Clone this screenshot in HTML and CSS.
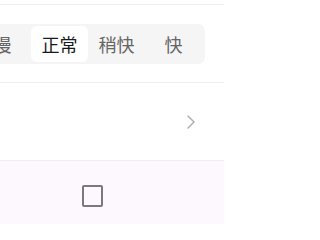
FILE: index.html
```html
<!DOCTYPE html>
<html lang="zh">
<head>
<meta charset="utf-8">
<link rel="stylesheet" href="styles.css">
</head>
<body>
<div class="page">
  <div class="prev-row"></div>
  <div class="speed-row">
    <div class="segmented">
      <div class="seg">慢</div>
      <div class="seg active">正常</div>
      <div class="seg">稍快</div>
      <div class="seg">快</div>
    </div>
  </div>
  <div class="link-row">
    <svg class="chevron" width="10" height="16" viewBox="0 0 10 16"><polyline points="2,2 8,8 2,14" fill="none" stroke="#b0b0b0" stroke-width="1.5" stroke-linecap="round" stroke-linejoin="round"/></svg>
  </div>
  <div class="bottom">
    <div class="checkbox"></div>
  </div>
</div>
</body>
</html>
```
FILE: styles.css
```css
html, body {
  margin: 0;
  padding: 0;
  background: #ffffff;
  font-family: "Noto Sans CJK SC", "Noto Sans", sans-serif;
}
.page {
  width: 224px;
  height: 224px;
  overflow: hidden;
}
.prev-row {
  height: 4px;
  border-bottom: 1px solid #f0f0f0;
}
.speed-row {
  height: 77px;
  border-bottom: 1px solid #eeeeee;
  display: flex;
  align-items: center;
}
.segmented {
  display: flex;
  margin-left: -29px;
  padding: 2px 3px;
  background: #f5f5f5;
  border-radius: 7px;
}
.seg {
  width: 57px;
  height: 36px;
  display: flex;
  align-items: center;
  justify-content: center;
  font-size: 18px;
  color: #666666;
  border-radius: 6px;
}
.seg.active {
  background: #ffffff;
  color: #1a1a1a;
}
.link-row {
  height: 78px;
  box-sizing: border-box;
  border-bottom: 1px solid #eeeeee;
  display: flex;
  align-items: center;
  justify-content: flex-end;
  padding-right: 28px;
}
.bottom {
  height: 63px;
  background: #fdf8fd;
  padding-top: 24px;
  padding-left: 82px;
  box-sizing: border-box;
}
.checkbox {
  width: 21px;
  height: 22px;
  box-sizing: border-box;
  border: 2.5px solid #7a7a7a;
  border-radius: 2px;
}
```
